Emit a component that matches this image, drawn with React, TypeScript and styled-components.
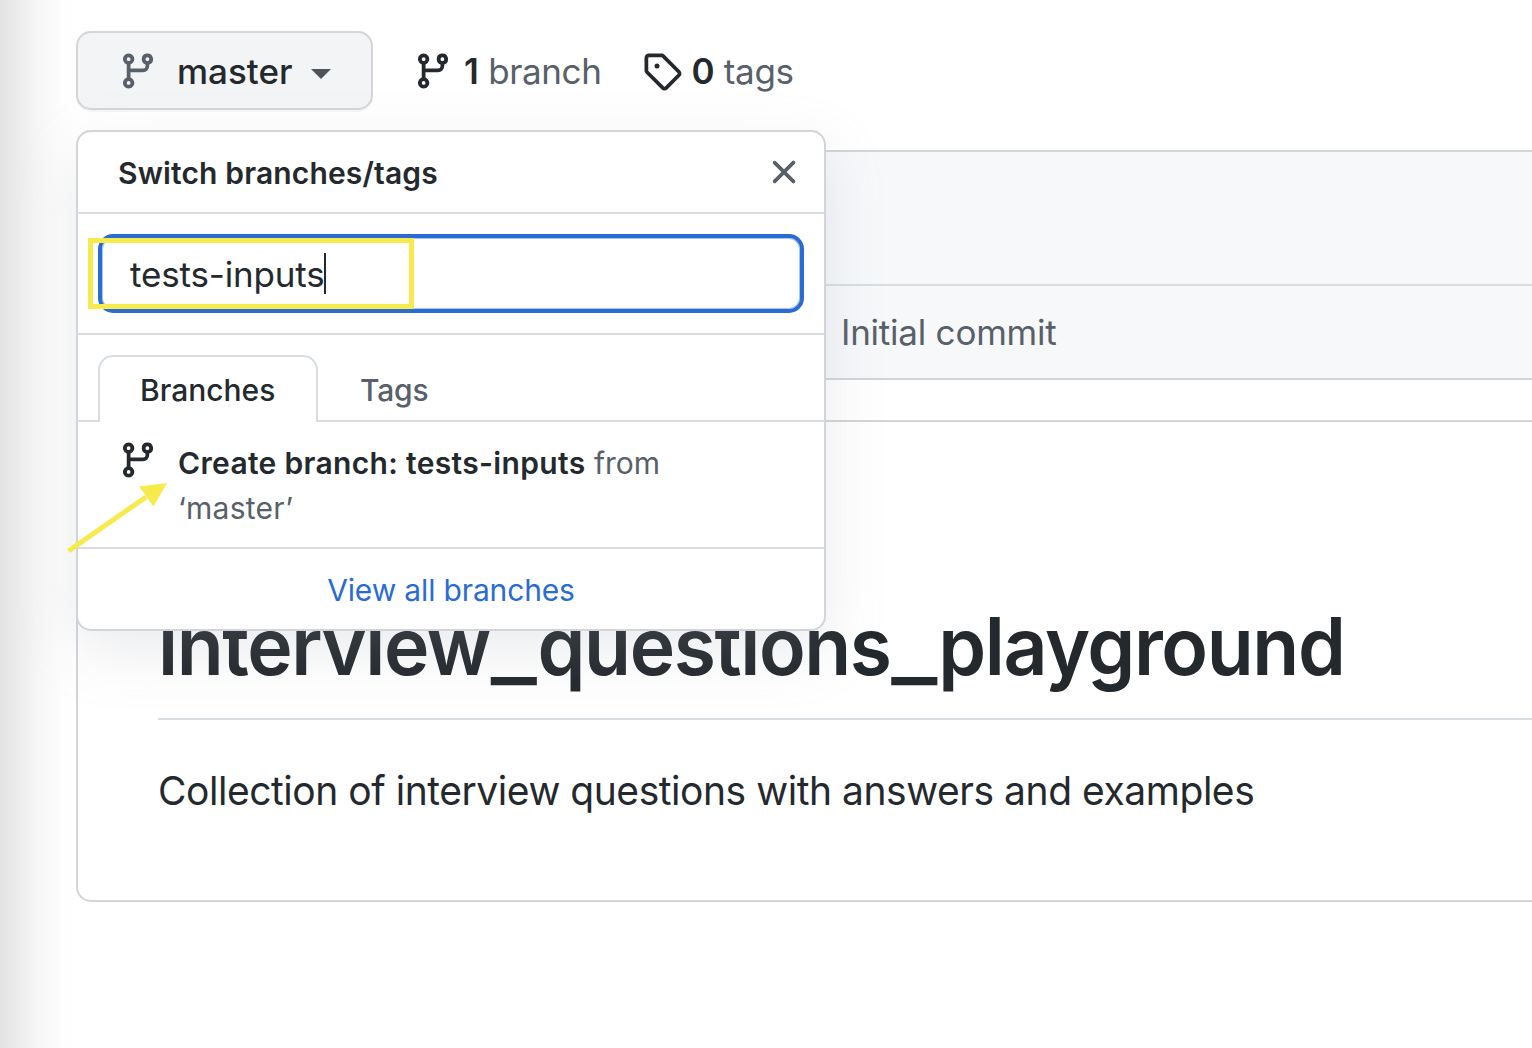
import React from 'react';
import styled, { createGlobalStyle, css } from 'styled-components';

const Global = createGlobalStyle`
  * { box-sizing: border-box; }
  html, body { margin: 0; padding: 0; overflow: hidden; background: #fff; }
  body { font-family: Inter, "Liberation Sans", sans-serif; color: #24292e; }
`;

const Page = styled.div`
  position: relative;
  width: 1532px;
  height: 1048px;
  overflow: hidden;
  padding: 31px 0 0 76px;
  background: linear-gradient(to right, #e2e2e2 0, #ececec 18px, #f7f7f7 40px, #fdfdfd 60px, #fff 78px);
`;

const Toolbar = styled.div`
  display: flex;
  align-items: center;
  height: 79px;
`;

const Text = styled.span<{ $size: number; $weight?: number; $track?: number; $color?: string; $line?: number }>`
  font-size: ${p => p.$size}px;
  font-weight: ${p => p.$weight ?? 400};
  letter-spacing: ${p => p.$track ?? 0}px;
  color: ${p => p.$color ?? '#24292e'};
  line-height: ${p => (p.$line ? `${p.$line}px` : 'inherit')};
  white-space: pre;
`;

const Condensed = styled(Text)<{ $stretch: number }>`
  display: inline-block;
  transform: scaleX(${p => p.$stretch});
  transform-origin: 0 50%;
`;

const Underscore = styled.span`
  display: inline-block;
  margin: 0 6px;
  transform: translateY(2px) scale(1.28, 1.01);
  letter-spacing: 0;
`;

const BranchButton = styled.button`
  display: flex;
  align-items: center;
  width: 297px;
  height: 79px;
  margin: 0;
  padding: 0 40px;
  border: 2px solid #d3d5d8;
  border-radius: 15px;
  background: #f3f4f6;
  box-shadow: 0 2px 0 rgba(27, 31, 35, 0.04);
  font-family: inherit;
`;

const ButtonLabel = styled.span`
  display: flex;
  width: 134px;
  margin-left: 19px;
`;

const Caret = styled.span`
  border: 10px solid transparent;
  border-top-color: #4f545a;
  border-bottom: 0;
  margin-top: 6px;
`;

const CountLink = styled.a<{ $left: number; $gap: number }>`
  display: flex;
  align-items: center;
  margin-left: ${p => p.$left}px;
  gap: ${p => p.$gap}px;
`;

const CountLabel = styled.span`
  display: flex;
`;

const Svg = styled.svg`
  display: block;
  flex: none;
  width: 40px;
  height: 40px;
`;

const CommitBox = styled.section`
  height: 230px;
  margin-top: 40px;
  border: 2px solid #d1d5da;
  border-right: 0;
  border-radius: 15px 0 0 0;
  background: #f6f8fa;
`;

const CommitHeader = styled.div`
  height: 134px;
  border-bottom: 2px solid #d8dde2;
`;

const CommitRow = styled.div`
  display: flex;
  align-items: center;
  height: 92px;
  padding-left: 763px;
`;

const ReadmeBox = styled.section`
  height: 482px;
  margin-top: 40px;
  padding: 174px 0 0 80px;
  border: 2px solid #d1d5da;
  border-right: 0;
  border-radius: 15px 0 0 15px;
`;

const Heading = styled.h1`
  display: flex;
  height: 124px;
  margin: 0;
  border-bottom: 2px solid #d8dde2;
`;

const Description = styled.p`
  display: flex;
  margin: 41px 0 0;
`;

const Popover = styled.div`
  position: absolute;
  left: 76px;
  top: 130px;
  width: 750px;
  height: 501px;
  border: 2px solid #d1d5da;
  border-radius: 15px;
  background: #fff;
  box-shadow: 0 20px 60px rgba(149, 157, 165, 0.2);
`;

const PopoverHeader = styled.header`
  display: flex;
  align-items: center;
  justify-content: space-between;
  height: 82px;
  padding: 0 20px 0 40px;
  border-bottom: 2px solid #d8dde2;
`;

const PopoverTitle = styled.div`
  display: flex;
  padding-top: 2px;
`;

const FilterArea = styled.div`
  height: 121px;
  padding: 20px 20px 0;
  border-bottom: 2px solid #d8dde2;
`;

const FilterField = styled.div`
  display: flex;
  align-items: center;
  height: 79px;
  padding-left: 28px;
  border: 4px solid #2a6bd4;
  border-radius: 15px;
  box-shadow: inset 0 0 0 1px #a9c4ef;
`;

const TextCursor = styled.span`
  width: 2px;
  height: 41px;
  margin-left: -1px;
  background: #24292e;
`;

const Tabs = styled.div`
  display: flex;
  align-items: flex-end;
  height: 87px;
  padding-left: 20px;
  box-shadow: inset 0 -2px #d8dde2;
`;

const Tab = styled.div<{ $selected?: boolean }>`
  display: flex;
  align-items: center;
  height: 67px;
  padding: 3px 42px 0;
  ${p => p.$selected && css`
    width: 220px;
    padding: 1px 40px 0;
    border: 2px solid #d8dde2;
    border-bottom: 0;
    border-radius: 15px 15px 0 0;
    background: #fff;
  `}
`;

const CreateRow = styled.div`
  display: flex;
  gap: 20px;
  height: 127px;
  padding: 18px 40px 0;
  border-bottom: 2px solid #d8dde2;
`;

const CreateLabel = styled.div`
  padding-top: 1px;
  font-size: 30px;
  line-height: 45px;
`;

const PopoverFooter = styled.footer`
  display: flex;
  align-items: center;
  justify-content: center;
  height: 80px;
  padding-top: 1px;
`;

const Highlight = styled.div`
  position: absolute;
  left: 88px;
  top: 238px;
  width: 326px;
  height: 71px;
  border: 5px solid #f6ea4c;
`;

const Arrow = styled.svg`
  position: absolute;
  left: 60px;
  top: 475px;
`;

const paths = {
  branch:
    'M11.75 2.5a.75.75 0 100 1.5.75.75 0 000-1.5zm-2.25.75a2.25 2.25 0 113 2.122V6A2.5 2.5 0 0110 8.5H5v2.128a2.251 2.251 0 11-1.5 0V5.372a2.25 2.25 0 111.5 0V7h5a1 1 0 001-1v-.628A2.25 2.25 0 019.5 3.25zM4.25 12a.75.75 0 100 1.5.75.75 0 000-1.5zM3.5 3.25a.75.75 0 111.5 0 .75.75 0 01-1.5 0z',
  tag:
    'M2.5 7.775V2.75a.25.25 0 01.25-.25h5.025a.25.25 0 01.177.073l6.25 6.25a.25.25 0 010 .354l-5.025 5.025a.25.25 0 01-.354 0l-6.25-6.25a.25.25 0 01-.073-.177zm-1.5 0V2.75C1 1.784 1.784 1 2.75 1h5.025c.464 0 .91.184 1.238.513l6.25 6.25a1.75 1.75 0 010 2.474l-5.026 5.026a1.75 1.75 0 01-2.474 0l-6.25-6.25A1.75 1.75 0 011 7.775zM6 5a1 1 0 100 2 1 1 0 000-2z',
  close:
    'M3.72 3.72a.75.75 0 011.06 0L8 6.94l3.22-3.22a.75.75 0 111.06 1.06L9.06 8l3.22 3.22a.75.75 0 11-1.06 1.06L8 9.06l-3.22 3.22a.75.75 0 01-1.06-1.06L6.94 8 3.72 4.78a.75.75 0 010-1.06z',
};

function Icon({ name, color = '#24292e' }: { name: keyof typeof paths; color?: string }) {
  return (
    <Svg viewBox="0 0 16 16" fill={color} fillRule="evenodd" aria-hidden>
      <path d={paths[name]} />
    </Svg>
  );
}

export default function App() {
  return (
    <>
      <Global />
      <Page>
        <Toolbar>
          <BranchButton>
            <Icon name="branch" color="#586069" />
            <ButtonLabel><Text $size={35} $weight={500}>master</Text></ButtonLabel>
            <Caret />
          </BranchButton>
          <CountLink $left={40} $gap={11}>
            <Icon name="branch" />
            <CountLabel>
              <Text $size={35} $weight={600}>1</Text>
              <Text $size={35} $track={-0.4} $color="#586069"> branch</Text>
            </CountLabel>
          </CountLink>
          <CountLink $left={40} $gap={10}>
            <Icon name="tag" />
            <CountLabel>
              <Text $size={35} $weight={600} $track={-0.4}>0</Text>
              <Text $size={35} $track={-0.3} $color="#586069"> tags</Text>
            </CountLabel>
          </CountLink>
        </Toolbar>
        <CommitBox>
          <CommitHeader />
          <CommitRow><Text $size={35} $track={-0.23} $color="#586069">Initial commit</Text></CommitRow>
        </CommitBox>
        <ReadmeBox>
          <Heading>
            <Condensed $size={80} $weight={600} $line={100} $track={-1.45} $stretch={0.96}>
              interview<Underscore>_</Underscore>questions<Underscore>_</Underscore>playground
            </Condensed>
          </Heading>
          <Description>
            <Condensed $size={40} $line={60} $track={-0.47} $stretch={0.975}>
              Collection of interview questions with answers and examples
            </Condensed>
          </Description>
        </ReadmeBox>
        <Popover>
          <PopoverHeader>
            <PopoverTitle><Text $size={30} $weight={600} $track={0.15}>Switch branches/tags</Text></PopoverTitle>
            <Icon name="close" color="#586069" />
          </PopoverHeader>
          <FilterArea>
            <FilterField>
              <Text $size={35} $track={-0.17}>tests-inputs</Text>
              <TextCursor />
            </FilterField>
          </FilterArea>
          <Tabs>
            <Tab $selected><Text $size={30} $weight={500}>Branches</Text></Tab>
            <Tab><Text $size={30} $weight={500} $track={-0.2} $color="#586069">Tags</Text></Tab>
          </Tabs>
          <CreateRow>
            <Icon name="branch" />
            <CreateLabel>
              <Text $size={30} $weight={600} $track={0.33}>Create branch: tests-inputs</Text>
              <Text $size={30} $color="#586069"> from</Text>
              <br />
              <Text $size={30} $track={0.25} $color="#586069">‘master’</Text>
            </CreateLabel>
          </CreateRow>
          <PopoverFooter><Text $size={30} $track={-0.15} $color="#2a6bd4">View all branches</Text></PopoverFooter>
        </Popover>
        <Highlight />
        <Arrow width="110" height="80" viewBox="0 0 110 80" aria-hidden>
          <path d="M8.5 76 86 22" stroke="#f6ea4c" strokeWidth="5" fill="none" />
          <path d="M107 8 79 11.500 93.500 31.500z" fill="#f6ea4c" />
        </Arrow>
      </Page>
    </>
  );
}
